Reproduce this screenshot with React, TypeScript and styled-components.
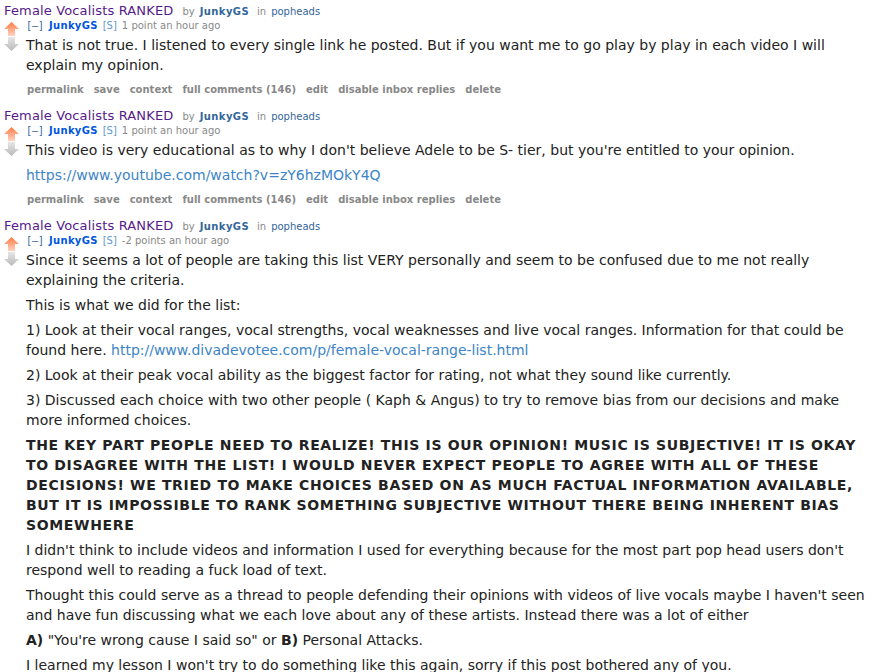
import React from "react";
import styled, { createGlobalStyle } from "styled-components";

const GlobalStyle = createGlobalStyle`
  html, body {
    margin: 0;
    padding: 0;
    background: #ffffff;
  }
  body {
    font-family: "DejaVu Sans", Verdana, sans-serif;
    color: #222222;
  }
`;

type CommentData = {
  score: string;
  body: React.ReactNode;
};

const UpArrow = () => (
  <svg width="15" height="14" viewBox="0 0 15 14">
    <defs>
      <linearGradient id="up" x1="0" y1="0" x2="0" y2="1">
        <stop offset="0" stopColor="#ff7b45" />
        <stop offset="1" stopColor="#ffd2c0" />
      </linearGradient>
    </defs>
    <path d="M7.5 0 L15 7 L11 7 L11 14 L4 14 L4 7 L0 7 Z" fill="url(#up)" />
  </svg>
);

const DownArrow = () => (
  <svg width="15" height="14" viewBox="0 0 15 14">
    <defs>
      <linearGradient id="down" x1="0" y1="0" x2="0" y2="1">
        <stop offset="0" stopColor="#e6e6e6" />
        <stop offset="1" stopColor="#b8b8b8" />
      </linearGradient>
    </defs>
    <path d="M4 0 L11 0 L11 7 L15 7 L7.5 14 L0 7 L4 7 Z" fill="url(#down)" />
  </svg>
);

const Comment = ({ score, body }: CommentData) => (
  <Item>
    <Parent>
      <TitleLink>Female Vocalists RANKED</TitleLink>
      <Meta>by</Meta>
      <Author>JunkyGS</Author>
      <Meta>in</Meta>
      <Sub>popheads</Sub>
    </Parent>
    <Row>
      <Votes>
        <Vote $gap={2}>
          <UpArrow />
        </Vote>
        <Vote $gap={1}>
          <DownArrow />
        </Vote>
      </Votes>
      <Entry>
        <Tagline>
          <Expand>[–]</Expand>
          <Submitter>JunkyGS</Submitter>
          <Flag>[S]</Flag>
          <span>{score} an hour ago</span>
        </Tagline>
        <Md>{body}</Md>
        <Buttons>
          <li>permalink</li>
          <li>save</li>
          <li>context</li>
          <li>full comments (146)</li>
          <li>edit</li>
          <li>disable inbox replies</li>
          <li>delete</li>
        </Buttons>
      </Entry>
    </Row>
  </Item>
);

const App = () => (
  <>
    <GlobalStyle />
    <Page>
      <Comment
        score="1 point"
        body={
          <p>
            That is not true. I listened to every single link he posted. But if
            you want me to go play by play in each video I will explain my
            opinion.
          </p>
        }
      />
      <Comment
        score="1 point"
        body={
          <>
            <p>
              This video is very educational as to why I don't believe Adele to
              be S- tier, but you're entitled to your opinion.
            </p>
            <p>
              <a>https://www.youtube.com/watch?v=zY6hzMOkY4Q</a>
            </p>
          </>
        }
      />
      <Comment
        score="-2 points"
        body={
          <>
            <p>
              Since it seems a lot of people are taking this list VERY
              personally and seem to be confused due to me not really explaining
              the criteria.
            </p>
            <p>This is what we did for the list:</p>
            <p>
              1) Look at their vocal ranges, vocal strengths, vocal weaknesses
              and live vocal ranges. Information for that could be found here.{" "}
              <a>http://www.divadevotee.com/p/female-vocal-range-list.html</a>
            </p>
            <p>
              2) Look at their peak vocal ability as the biggest factor for
              rating, not what they sound like currently.
            </p>
            <p>
              3) Discussed each choice with two other people ( Kaph &amp; Angus)
              to try to remove bias from our decisions and make more informed
              choices.
            </p>
            <Shout>
              <strong>
                THE KEY PART PEOPLE NEED TO REALIZE! THIS IS OUR OPINION! MUSIC
                IS SUBJECTIVE! IT IS OKAY
                <br />
                TO DISAGREE WITH THE LIST! I WOULD NEVER EXPECT PEOPLE TO AGREE
                WITH ALL OF THESE
                <br />
                DECISIONS! WE TRIED TO MAKE CHOICES BASED ON AS MUCH FACTUAL
                INFORMATION AVAILABLE,
                <br />
                BUT IT IS IMPOSSIBLE TO RANK SOMETHING SUBJECTIVE WITHOUT THERE
                BEING INHERENT BIAS
                <br />
                SOMEWHERE
              </strong>
            </Shout>
            <p>
              I didn't think to include videos and information I used for
              everything because for the most part pop head users don't respond
              well to reading a fuck load of text.
            </p>
            <p>
              Thought this could serve as a thread to people defending their
              opinions with videos of live vocals maybe I haven't seen and have
              fun discussing what we each love about any of these artists.
              Instead there was a lot of either
            </p>
            <p>
              <strong>A)</strong> "You're wrong cause I said so" or{" "}
              <strong>B)</strong> Personal Attacks.
            </p>
            <p>
              I learned my lesson I won't try to do something like this again,
              sorry if this post bothered any of you.
            </p>
          </>
        }
      />
    </Page>
  </>
);

export default App;

const Page = styled.div`
  padding: 3px 10px 0 4px;
`;

const Item = styled.div`
  & + & {
    margin-top: 10px;
  }
`;

const Parent = styled.div`
  display: flex;
  align-items: baseline;
  line-height: 16px;
  white-space: nowrap;
`;

const TitleLink = styled.a`
  font-size: 13px;
  color: #551a8b;
  letter-spacing: 0.15px;
  margin-right: 9px;
`;

const Meta = styled.span`
  font-size: 10px;
  color: #888888;
  margin-right: 5px;
`;

const Author = styled.span`
  font-size: 10px;
  font-weight: bold;
  letter-spacing: 0.4px;
  color: #336699;
  margin-right: 8px;
`;

const Sub = styled.span`
  font-size: 10px;
  color: #336699;
`;

const Row = styled.div`
  display: flex;
`;

const Votes = styled.div`
  width: 22px;
  flex: none;
  display: flex;
  flex-direction: column;
`;

const Vote = styled.div<{ $gap: number }>`
  height: 14px;
  margin-top: ${(p) => p.$gap}px;
  line-height: 0;
`;

const Entry = styled.div`
  flex: 1;
  min-width: 0;
`;

const Tagline = styled.div`
  font-size: 10px;
  line-height: 11px;
  color: #888888;
  white-space: nowrap;

  & > * {
    margin-right: 5px;
  }
`;

const Expand = styled.span`
  color: #369;
  font-family: "DejaVu Sans Mono", monospace;
`;

const Submitter = styled.span`
  color: #0055df;
  font-weight: bold;
  letter-spacing: 0.3px;
`;

const Flag = styled.span`
  color: #5f99cf;
`;

const Md = styled.div`
  font-size: 14px;
  line-height: 20px;
  color: #222222;
  max-width: 846px;

  p {
    margin: 5px 0;
  }

  p:first-child {
    margin-top: 4px;
  }

  strong {
    font-weight: bold;
  }

  a {
    color: #3d85c6;
  }
`;

const Shout = styled.p`
  white-space: nowrap;
  letter-spacing: 0.65px;
`;

const Buttons = styled.ul`
  list-style: none;
  margin: 0;
  padding: 2px 0 0 1px;
  display: flex;
  gap: 10px;
  font-size: 10px;
  font-weight: bold;
  line-height: 16px;
  color: #888888;
  white-space: nowrap;
`;
